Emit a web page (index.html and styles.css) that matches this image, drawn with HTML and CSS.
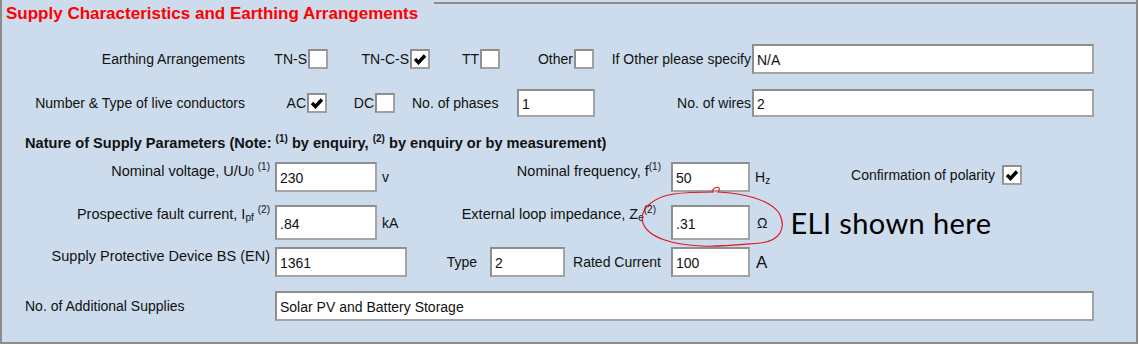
FILE: index.html
```html
<!DOCTYPE html>
<html lang="en">
<head>
    <meta charset="UTF-8">
    <title>Supply Characteristics</title>
    <link rel="stylesheet" href="styles.css">
</head>
<body>
    <div class="panel">
        <div class="title-row">
            <h1 class="title">Supply Characteristics and Earthing Arrangements</h1>
            <div class="title-line"></div>
        </div>

        <!-- earthing -->
        <div class="row row-earth">
            <span class="lbl">Earthing Arrangements</span>
            <span class="lbl">TN-S</span><span class="cb"></span>
            <span class="lbl">TN-C-S</span><span class="cb"><svg viewBox="0 0 16 16"><path d="M3 8 L6.5 11.5 L13 4.5"/></svg></span>
            <span class="lbl">TT</span><span class="cb"></span>
            <span class="lbl">Other</span><span class="cb"></span>
            <span class="lbl">If Other please specify</span>
            <input class="field" type="text" value="N/A" readonly>
        </div>

        <!-- conductors -->
        <div class="row row-cond">
            <span class="lbl">Number &amp; Type of live conductors</span>
            <span class="lbl">AC</span><span class="cb"><svg viewBox="0 0 16 16"><path d="M3 8 L6.5 11.5 L13 4.5"/></svg></span>
            <span class="lbl">DC</span><span class="cb"></span>
            <span class="lbl lbl-left">No. of phases</span>
            <input class="field" type="text" value="1" readonly>
            <span class="lbl">No. of wires</span>
            <input class="field" type="text" value="2" readonly>
        </div>

        <h2 class="heading">Nature of Supply Parameters (Note: <sup>(1)</sup> by enquiry, <sup>(2)</sup> by enquiry or by measurement)</h2>

        <div class="row row-nom">
            <span class="lbl lbl-top">Nominal voltage, U/U<small>0</small>&nbsp;<sup>(1)</sup></span>
            <input class="field" type="text" value="230" readonly>
            <span class="unit">v</span>
            <span class="lbl lbl-top pr10">Nominal frequency, f<sup>(1)</sup></span>
            <input class="field" type="text" value="50" readonly>
            <span class="unit">H<sub>z</sub></span>
            <span class="lbl lbl-conf">Confirmation of polarity</span>
            <span class="cb cb-conf"><svg viewBox="0 0 16 16"><path d="M3 8 L6.5 11.5 L13 4.5"/></svg></span>
        </div>

        <div class="row row-fault">
            <span class="lbl lbl-top">Prospective fault current, I<sub>pf</sub>&nbsp;<sup>(2)</sup></span>
            <input class="field" type="text" value=".84" readonly>
            <span class="unit">kA</span>
            <span class="lbl lbl-top pr15">External loop impedance, Z<sub>e</sub><sup>(2)</sup></span>
            <input class="field" type="text" value=".31" readonly>
            <span class="unit unit-eli"><span class="ohm">&Omega;</span><span class="note">ELI shown here</span></span>
        </div>

        <div class="row row-device">
            <span class="lbl lbl-top">Supply Protective Device BS (EN)</span>
            <input class="field" type="text" value="1361" readonly>
            <span class="lbl pr13">Type</span>
            <input class="field" type="text" value="2" readonly>
            <span class="lbl pr10">Rated Current</span>
            <input class="field" type="text" value="100" readonly>
            <span class="unit unit-big">A</span>
        </div>

        <div class="row row-extra">
            <span class="lbl lbl-left pl23">No. of Additional Supplies</span>
            <input class="field" type="text" value="Solar PV and Battery Storage" readonly>
        </div>

        <!-- hand drawn annotation -->
        <svg class="scribble" viewBox="0 0 150 70" width="150" height="70">
            <path d="M72 8 C76 2 82 4 78 9 C104 10 130 17 139 30 C147 45 140 58 120 60 C96 62 78 64 62 63 C34 62 8 55 3 40 C-1 27 12 14 34 11 C48 9 60 9 74 9"/>
        </svg>
    </div>
</body>
</html>
```

FILE: styles.css
```css
/* Supply characteristics panel */
body {
    margin: 0;
    font-family: "Liberation Sans", Arial, sans-serif;
    font-size: 14px;
    color: #111;
    background-color: #fff;
}

.panel {
    position: relative;
    box-sizing: border-box;
    width: 1138px;
    height: 344px;
    background-color: #ccdcec;
    border: 2px solid #8c8c8c;
    border-top: none;
}

.title-row {
    display: flex;
    height: 30px;
}

.title {
    margin: 0;
    padding: 4px 16px 0 4px;
    font-size: 17px;
    line-height: 20px;
    font-weight: bold;
    color: #f00;
    white-space: nowrap;
}

.title-line {
    flex: 1;
    margin-top: 2px;
    border-top: 2px solid #8c8c8c;
}

.row {
    display: grid;
    align-items: center;
}

.row-earth {
    margin-top: 14px;
    height: 30px;
    grid-template-columns: 244px 62px 20px 82px 20px 50px 20px 74px 20px 158px 342px;
}

.row-cond {
    margin-top: 15px;
    height: 28px;
    grid-template-columns: 244px 61px 20px 48px 20px 122px 78px 157px 342px;
}

.row-nom {
    margin-top: 9px;
    height: 30px;
    grid-template-columns: 273px 102px 83px 211px 79px 101px 151px 20px;
}

.row-fault {
    margin-top: 13px;
    height: 30px;
    grid-template-columns: 273px 102px 83px 211px 79px auto;
}

.row-device {
    margin-top: 12px;
    height: 30px;
    grid-template-columns: 273px 132px 83px 75px 106px 79px auto;
}

.row-extra {
    margin-top: 14px;
    height: 30px;
    grid-template-columns: 273px 819px;
}

.lbl {
    text-align: right;
    padding-right: 1px;
    white-space: nowrap;
    line-height: 16px;
}

.lbl-left {
    text-align: left;
    padding-left: 17px;
}

.lbl-top {
    align-self: start;
    padding-right: 5px;
    padding-top: 1px;
    font-size: 14.5px;
}

.pr10 { padding-right: 10px; }
.pr13 { padding-right: 13px; }
.pr15 { padding-right: 15px; }
.pl23 { padding-left: 23px; }

.lbl-conf {
    padding-right: 7px;
    margin-top: -4px;
}

.lbl sup, .heading sup {
    font-size: 10px;
    vertical-align: 6px;
    line-height: 0;
}

.lbl sub, .unit sub {
    font-size: 10px;
    vertical-align: -2px;
    line-height: 0;
}

.lbl small {
    font-size: 10px;
}

.field {
    box-sizing: border-box;
    width: 100%;
    height: 100%;
    margin: 0;
    padding: 2px 0 0 3px;
    font-family: "Liberation Sans", Arial, sans-serif;
    font-size: 14px;
    color: #111;
    background-color: #fff;
    border: 2px solid #a4a4a4;
    border-top-color: #8e8e8e;
    border-left-color: #8e8e8e;
    border-radius: 0;
    outline: none;
}

.cb {
    box-sizing: border-box;
    width: 20px;
    height: 20px;
    background-color: #fff;
    border: 2px solid #a0a0a0;
    border-top-color: #8e8e8e;
    border-left-color: #8e8e8e;
}

.cb svg {
    display: block;
    width: 16px;
    height: 16px;
}

.cb svg path {
    fill: none;
    stroke: #000;
    stroke-width: 3.4;
}

.cb-conf {
    margin-top: -4px;
}

.unit {
    padding-left: 5px;
}

.unit-eli {
    display: flex;
    align-items: center;
    padding-left: 7px;
}

.note {
    margin-left: 23px;
    font-family: Lato, "Open Sans", sans-serif;
    font-size: 29px;
    letter-spacing: 0.4px;
    color: #000;
}

.unit-big {
    padding-left: 6px;
    font-size: 17px;
    padding-top: 2px;
}

.heading {
    margin: 16px 0 0;
    padding-left: 23px;
    height: 20px;
    font-size: 14.6px;
    line-height: 20px;
    font-weight: bold;
}

.scribble {
    position: absolute;
    left: 638px;
    top: 183px;
}

.scribble path {
    fill: none;
    stroke: #e4141b;
    stroke-width: 1.1;
}
```
